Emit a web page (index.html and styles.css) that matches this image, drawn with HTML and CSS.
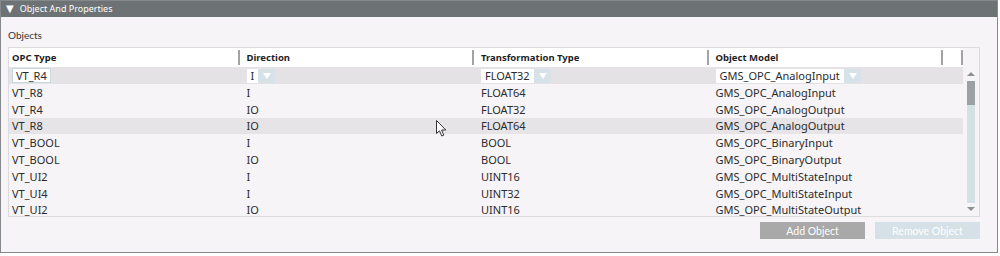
FILE: index.html
```html
<!DOCTYPE html>
<html lang="en">

<head>
    <meta charset="UTF-8">
    <title>Object And Properties</title>
    <link rel="stylesheet" href="styles.css">
</head>

<body>

    <div class="panel">
        <div class="panel-title"><span class="caret">&#9660;</span>Object And Properties</div>

        <div class="panel-body">
            <div class="section-label">Objects</div>

            <div class="grid-box">
                <div class="table">
                    <div class="row head">
                        <div class="cell"><span class="txt">OPC Type</span><span class="sep"></span></div>
                        <div class="cell"><span class="txt">Direction</span><span class="sep"></span></div>
                        <div class="cell"><span class="txt">Transformation Type</span><span class="sep"></span></div>
                        <div class="cell"><span class="txt">Object Model</span><span class="sep"></span></div>
                        <div class="cell last"><span class="sep"></span></div>
                    </div>

                    <div class="row filter">
                        <div class="cell"><span class="textbox">VT_R4</span></div>
                        <div class="cell"><span class="combo"><span class="combo-val">I</span><span class="combo-btn"></span></span></div>
                        <div class="cell"><span class="combo"><span class="combo-val">FLOAT32</span><span class="combo-btn"></span></span></div>
                        <div class="cell"><span class="combo"><span class="combo-val">GMS_OPC_AnalogInput</span><span class="combo-btn"></span></span></div>
                        <div class="cell last"></div>
                    </div>

                    <div class="row">
                        <div class="cell">VT_R8</div><div class="cell">I</div><div class="cell">FLOAT64</div><div class="cell">GMS_OPC_AnalogInput</div><div class="cell last"></div>
                    </div>
                    <div class="row">
                        <div class="cell">VT_R4</div><div class="cell">IO</div><div class="cell">FLOAT32</div><div class="cell">GMS_OPC_AnalogOutput</div><div class="cell last"></div>
                    </div>
                    <div class="row hover">
                        <div class="cell">VT_R8</div><div class="cell">IO</div><div class="cell">FLOAT64</div><div class="cell">GMS_OPC_AnalogOutput</div><div class="cell last"></div>
                    </div>
                    <div class="row">
                        <div class="cell">VT_BOOL</div><div class="cell">I</div><div class="cell">BOOL</div><div class="cell">GMS_OPC_BinaryInput</div><div class="cell last"></div>
                    </div>
                    <div class="row">
                        <div class="cell">VT_BOOL</div><div class="cell">IO</div><div class="cell">BOOL</div><div class="cell">GMS_OPC_BinaryOutput</div><div class="cell last"></div>
                    </div>
                    <div class="row">
                        <div class="cell">VT_UI2</div><div class="cell">I</div><div class="cell">UINT16</div><div class="cell">GMS_OPC_MultiStateInput</div><div class="cell last"></div>
                    </div>
                    <div class="row">
                        <div class="cell">VT_UI4</div><div class="cell">I</div><div class="cell">UINT32</div><div class="cell">GMS_OPC_MultiStateInput</div><div class="cell last"></div>
                    </div>
                    <div class="row">
                        <div class="cell">VT_UI2</div><div class="cell">IO</div><div class="cell">UINT16</div><div class="cell">GMS_OPC_MultiStateOutput</div><div class="cell last"></div>
                    </div>

                    <svg class="cursor" width="11" height="17" viewBox="0 0 11 17">
                        <path d="M0.5 0.5 L0.5 13.5 L3.5 10.8 L5.8 16 L7.8 15.1 L5.6 10 L9.8 10 Z" fill="#fff" stroke="#333" stroke-width="1"/>
                    </svg>
                </div>

                <div class="scrollbar">
                    <span class="arrow up"></span>
                    <div class="thumb"></div>
                    <div class="track"></div>
                    <span class="arrow down"></span>
                </div>
            </div>

            <div class="buttons">
                <button class="btn add">Add Object</button>
                <button class="btn remove">Remove Object</button>
            </div>
        </div>
    </div>

</body>

</html>
```

FILE: styles.css
```css
body {
    margin: 0;
    background: #ffffff;
    font-family: "Noto Sans", "Open Sans", sans-serif;
    font-size: 11px;
    color: #2b2b2b;
}

.panel {
    width: 998px;
    height: 253px;
    box-sizing: border-box;
    border: 1px solid #85898b;
    background: #f7f4f7;
}

.panel-title {
    height: 16px;
    line-height: 16px;
    background: #6d7274;
    color: #ffffff;
    font-size: 9px;
    padding-left: 5px;
}

.caret {
    font-family: "DejaVu Sans", sans-serif;
    font-size: 10px;
    margin-right: 6px;
}

.panel-body {
    padding: 10px 17px 0 7px;
}

.section-label {
    height: 20px;
    line-height: 16px;
    font-family: Lato, sans-serif;
    font-size: 10px;
    color: #333;
}

.grid-box {
    display: flex;
    height: 170px;
    border: 1px solid #dcdcdc;
    box-sizing: border-box;
}

.table {
    position: relative;
    width: 954px;
    overflow: hidden;
}

.row {
    display: grid;
    grid-template-columns: 234.5px 234.5px 234.5px 234.5px 16px;
    height: 16.8px;
    align-items: center;
}

.cell {
    padding-left: 3px;
    white-space: nowrap;
    display: flex;
    align-items: center;
}

.row.head {
    height: 19px;
    background: #ffffff;
    font-size: 9.5px;
    font-weight: bold;
    color: #1e1e1e;
}

.head .txt {
    flex: 1;
}

.head .sep {
    width: 2px;
    height: 15px;
    background: #a3a3a3;
    margin-right: 4px;
}

.head .last {
    justify-content: flex-end;
}

.head .last .sep {
    margin-right: 0;
}

.row.filter {
    height: 17px;
    background: #e4e2e4;
}

.textbox {
    background: #ffffff;
    border: 1px solid #c9d9e0;
    height: 13px;
    line-height: 13px;
    padding: 0 3px;
}

.combo {
    display: flex;
    height: 14px;
}

.combo-val {
    background: #ffffff;
    line-height: 14px;
    padding: 0 4px 0 4px;
}

.combo-btn {
    width: 17px;
    background: #d6e2e7;
    position: relative;
}

.combo-btn::after {
    content: "";
    position: absolute;
    left: 5px;
    top: 4px;
    border-left: 4px solid transparent;
    border-right: 4px solid transparent;
    border-top: 6px solid #ffffff;
}

.row.hover {
    background: #e6e4e7;
}

.cursor {
    position: absolute;
    left: 427px;
    top: 72px;
}

.scrollbar {
    flex: 1;
    display: flex;
    flex-direction: column;
    align-items: center;
    padding-top: 24px;
}

.arrow {
    width: 0;
    height: 0;
    border-left: 4px solid transparent;
    border-right: 4px solid transparent;
}

.arrow.up {
    border-bottom: 4px solid #8c9193;
    margin-bottom: 5px;
}

.arrow.down {
    border-top: 4px solid #8c9193;
    margin-top: 4px;
}

.thumb {
    width: 8px;
    height: 24px;
    background: #9ca1a3;
}

.track {
    width: 8px;
    height: 98px;
    background: #d3e0e5;
}

.buttons {
    display: flex;
    justify-content: flex-end;
    gap: 10px;
    margin-top: 5px;
}

.btn {
    width: 105px;
    height: 17px;
    border: none;
    padding: 0;
    color: #ffffff;
    font-family: Lato, sans-serif;
    font-size: 10.5px;
}

.btn.add {
    background: #a9a9a9;
}

.btn.remove {
    background: #d5e1e6;
}
```
